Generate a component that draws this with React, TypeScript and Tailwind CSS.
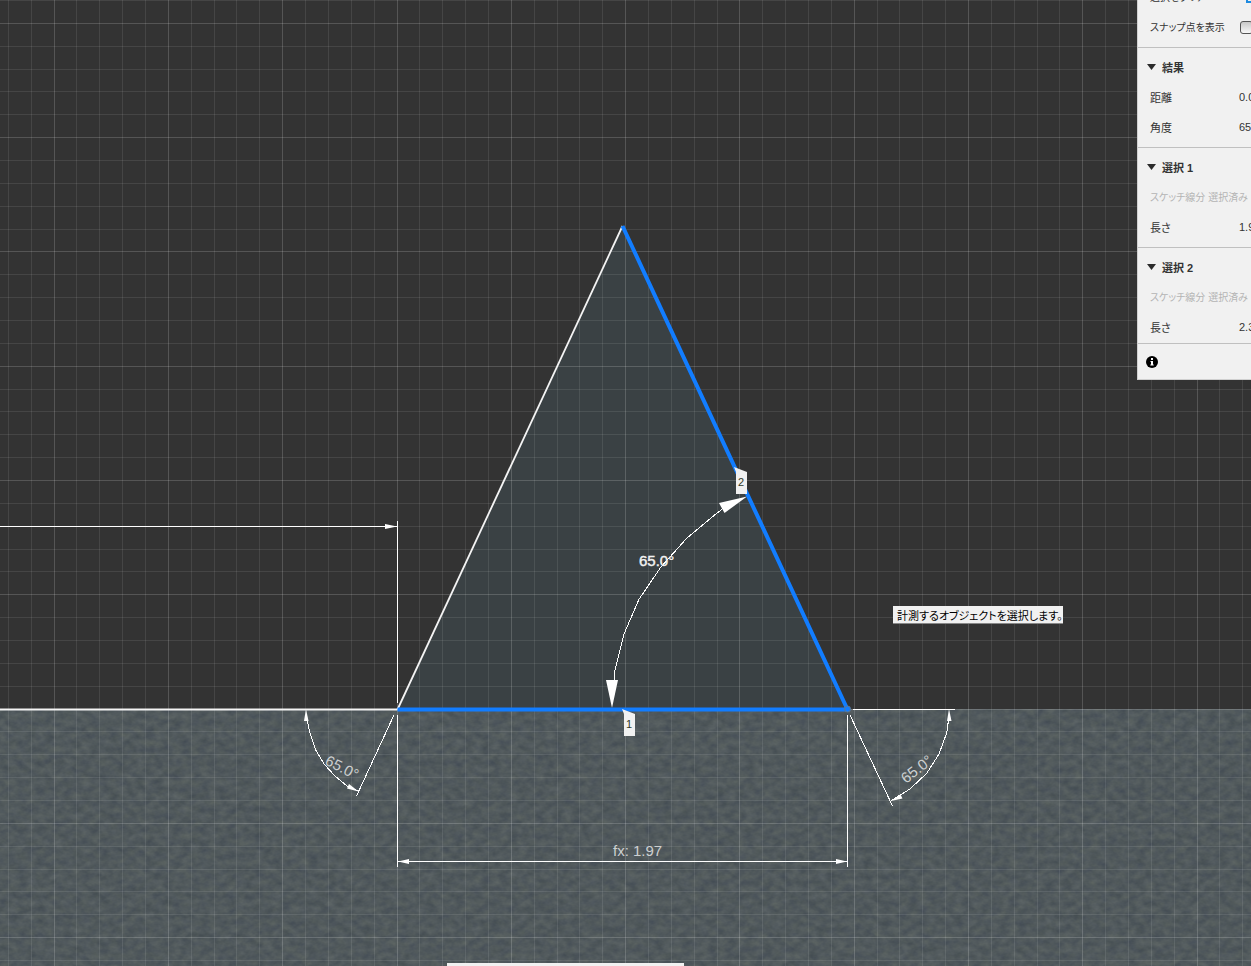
import type { ReactNode } from "react";

const STEP = 22.86;
const LINES = Array.from({ length: 170 }, (_, i) => i - 2);

const gridX = (n: number) => Math.floor(54.1 + STEP * n) + 0.5;
const gridY = (n: number) => Math.floor(23.3 + STEP * n) + 0.5;

function Grid() {
  return (
    <g shapeRendering="crispEdges" stroke="#ffffff">
      {LINES.map((n) => (
        <g key={n} strokeOpacity={n % 5 === 0 ? 0.17 : 0.09}>
          <line x1={gridX(n)} x2={gridX(n)} y1="0" y2="100%" />
          <line x1="0" x2="100%" y1={gridY(n)} y2={gridY(n)} />
        </g>
      ))}
    </g>
  );
}

function Drawing() {
  return (
    <svg className="absolute inset-0 h-full w-full" role="img" aria-label="スケッチ">
      <defs>
        <filter id="stone" x="0" y="0" width="100%" height="100%" colorInterpolationFilters="sRGB">
          <feTurbulence type="fractalNoise" baseFrequency="0.11 0.15" numOctaves={3} seed={12} />
          <feColorMatrix
            values="0 0 0 0.12 0.256
                    0 0 0 0.115 0.291
                    0 0 0.03 0.08 0.306
                    0 0 0 0 1"
          />
        </filter>
      </defs>

      <rect y="709" width="100%" height="100%" fill="#50595c" />
      <rect y="709" width="100%" height="100%" filter="url(#stone)" />
      <polygon points="397.5,709.5 622.5,226 847.5,709.5" fill="#3a4144" />
      <Grid />

      <g stroke="#ffffff" fill="none" shapeRendering="crispEdges">
        <path d="M0 526.5H397M397.5 521V703M397.5 715V867M847.5 715V867M398 861.5H847M853 709.5H955" />
        <path d="M394 715L356.500 796M850 715L892.500 806" />
        <polyline points="307,720 310,733 315.700,750 324.300,764.300 335,776 346.700,785.700 358,791" />
        <polyline points="948.500,720 946.700,733 939,754 926.700,773.300 910,789 891,800.700" />
        <polyline points="723,508.500 716.700,513.300 686.700,538.300 660.700,567.300 639,599.300 624.300,633.300 614.700,671.700 614,682" />
      </g>
      <g fill="#ffffff">
        <polygon points="397,526.5 385,524 385,529" />
        <polygon points="398,861.5 409,859 409,864" />
        <polygon points="847,861.5 836,859 836,864" />
        <polygon points="306,709 304,721 308.500,721" />
        <polygon points="358.500,791.500 349,784 347,788.500" />
        <polygon points="949,709 947,721 951.500,721" />
        <polygon points="891,801 900.500,794.500 902.500,798.500" />
        <polygon points="747,496.500 719,503 724.500,513" />
        <polygon points="606,680 618,680 612,708" />
      </g>

      <path d="M0 709.5H397.500" stroke="#f4f4f4" strokeWidth="2" />
      <path d="M397.500 709.500L622.500 226" stroke="#f4f4f4" strokeWidth="1.8" />
      <path d="M397.500 709.500H847.500L622.500 226" fill="none" stroke="#127dff" strokeWidth="4" strokeLinejoin="round" />
      <circle cx="847.5" cy="709" r="3" fill="#127dff" stroke="#5b7896" />

      <g fontFamily="'Liberation Sans', Arial, sans-serif" fontSize="15" fill="#cdd0d1">
        <text x="613" y="856">fx: 1.97</text>
        <text transform="translate(324 764) rotate(27)">65.0°</text>
        <text transform="translate(906 784) rotate(-38)">65.0°</text>
        <text x="639" y="566" fill="#f2f2f2" stroke="#f2f2f2" strokeWidth="0.4">65.0°</text>
      </g>

      <g fill="#f1f1f1" fontFamily="'Liberation Sans', Arial, sans-serif" fontSize="11">
        <path d="M734 467L747 472V494H736V472Z" />
        <path d="M622 709L635 714V736H624V714Z" />
        <text x="738" y="486" fill="#33381f">2</text>
        <text x="626" y="728" fill="#33381f">1</text>
      </g>
    </svg>
  );
}

function Row({ label, value }: { label: string; value?: string }) {
  return (
    <div className="flex h-[30px] items-center pl-3">
      <span className={value ? "w-[89px] shrink-0 pt-0.5" : "pt-0.5 text-[10px] text-[#b4b4b4]"}>{label}</span>
      {value && <span>{value}</span>}
    </div>
  );
}

function Section({ title, children, last = false }: { title: string; children: ReactNode; last?: boolean }) {
  return (
    <section className={last ? "border-t border-[#c0c0c0] pt-1 pb-px" : "border-t border-[#c0c0c0] pt-1 pb-[5px]"}>
      <button type="button" className="flex h-[30px] w-full items-center gap-1.5 pl-[9px] font-bold">
        <svg className="h-[6px] w-[9px]" viewBox="0 0 9 6" aria-hidden="true">
          <path d="M0 0H9L4.500 6Z" fill="#2b2b2b" />
        </svg>
        <span className="pt-0.5">{title}</span>
      </button>
      {children}
    </section>
  );
}

function MeasurePanel() {
  return (
    <aside className="absolute top-0 right-0 w-[114px] overflow-hidden border-b border-l border-[#d0d0d0] bg-[#f1f1f1] font-['Liberation_Sans','Noto_Sans_CJK_JP',sans-serif] text-[11px] leading-4 whitespace-nowrap text-[#333333] [font-feature-settings:'palt']">
      <div className="flex h-3 items-end overflow-hidden">
        <button type="button" className="flex h-[30px] shrink-0 items-center pl-3">
          <span className="w-24 shrink-0 pt-0.5 text-left text-[10px]">選択をクリア</span>
          <span className="h-[11px] w-3 shrink-0 border-2 border-[#1e8be0]" />
        </button>
      </div>
      <div className="mb-[5px] flex h-[30px] items-center pl-3">
        <label htmlFor="snap" className="w-[90px] shrink-0 pt-0.5 text-[10px]">スナップ点を表示</label>
        <input
          id="snap"
          type="checkbox"
          className="h-[13px] w-[13px] shrink-0 appearance-none rounded-[3px] border border-[#555555] bg-linear-to-b from-[#c8c8c8] to-[#f8f8f8]"
        />
      </div>
      <Section title="結果">
        <Row label="距離" value="0.00 mm" />
        <Row label="角度" value="65.0 deg" />
      </Section>
      <Section title="選択 1">
        <Row label="スケッチ線分 選択済み" />
        <Row label="長さ" value="1.97 mm" />
      </Section>
      <Section title="選択 2" last>
        <Row label="スケッチ線分 選択済み" />
        <Row label="長さ" value="2.331 mm" />
      </Section>
      <div className="flex h-9 items-center border-t border-[#c0c0c0] pl-2">
        <button type="button" aria-label="情報">
          <svg className="h-3 w-3" viewBox="0 0 12 12" aria-hidden="true">
            <circle cx="6" cy="6" r="6" fill="#000000" />
            <path d="M5 2H7V4H5ZM4.500 5H7V8.500H7.700V9.500H4.300V8.500H5V6H4.500Z" fill="#ffffff" />
          </svg>
        </button>
      </div>
    </aside>
  );
}

export default function App() {
  return (
    <main className="relative h-screen w-full overflow-hidden bg-[#333333]">
      <Drawing />
      <div
        role="tooltip"
        className="absolute top-[606px] left-[893px] flex h-[18px] items-center border-b border-[#888888] bg-[#f1f1f1] pl-1 font-['Noto_Sans_CJK_JP',sans-serif] text-[11px] leading-4 whitespace-nowrap text-black [font-feature-settings:'palt']"
      >
        計測するオブジェクトを選択します。
      </div>
      <div className="absolute bottom-0 left-[447px] h-[3px] w-[237px] bg-[#f1f1f1]" />
      <MeasurePanel />
    </main>
  );
}
